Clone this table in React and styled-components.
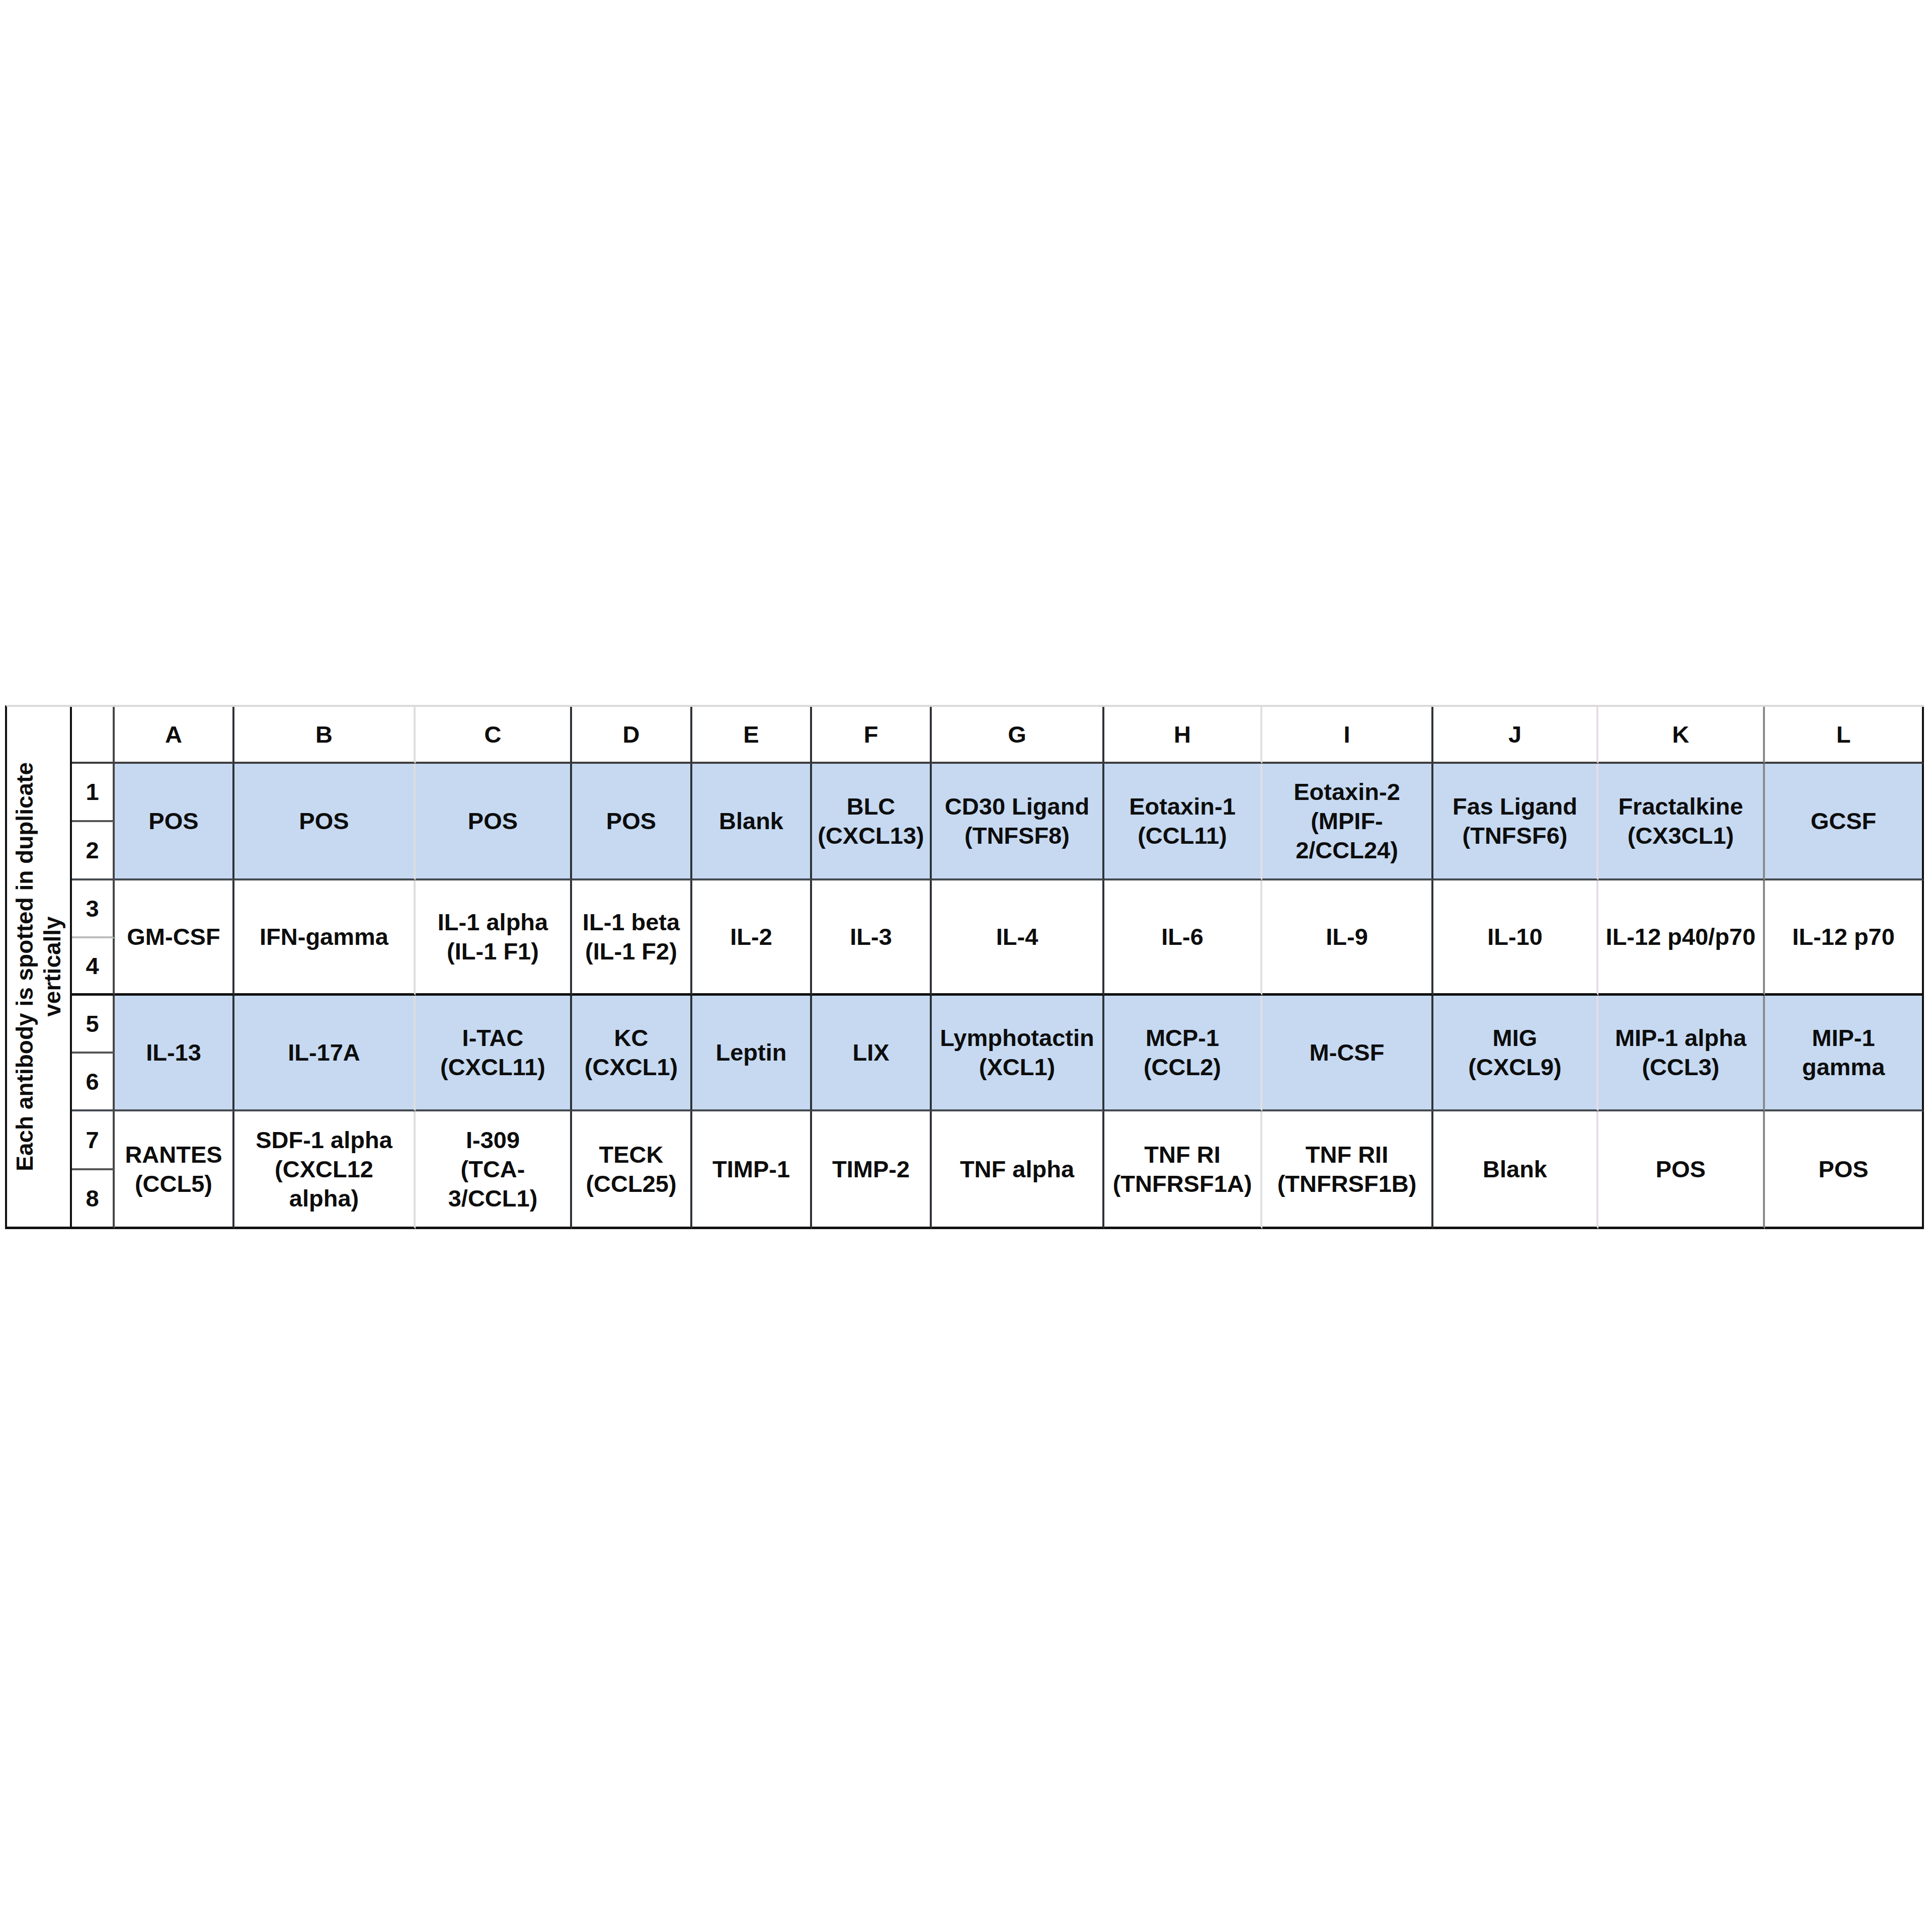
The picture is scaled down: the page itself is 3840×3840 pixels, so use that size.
import React from "react";
import styled, { createGlobalStyle } from "styled-components";

const Global = createGlobalStyle`
  html, body { margin: 0; padding: 0; background: #ffffff; }
  body { font-family: "Liberation Sans", Arial, sans-serif; }
`;

const Page = styled.div`
  width: 3840px;
  height: 3840px;
  box-sizing: border-box;
  padding: 1401px 0 0 10px;
  background: #ffffff;
`;

const COLS = [129, 85, 238, 360, 311, 239, 238, 238, 343, 314, 340, 328, 331, 316];
const ROWS = [113, 116, 116, 115, 114, 115, 115, 117, 117];

const Sheet = styled.div`
  display: grid;
  grid-template-columns: ${COLS.map((c) => c + "px").join(" ")};
  grid-template-rows: ${ROWS.map((r) => r + "px").join(" ")};
  border-top: 4px solid #dadada;
  border-left: 4px solid #111111;
  width: max-content;
  font-family: "Liberation Sans", Arial, sans-serif;
  font-weight: 700;
  font-size: 47px;
  line-height: 58px;
  color: #0d0d0d;
`;

const Cell = styled.div`
  grid-column: ${(p) => p.$col};
  grid-row: ${(p) => p.$row} / span ${(p) => p.$span || 1};
  box-sizing: border-box;
  display: flex;
  align-items: center;
  justify-content: center;
  text-align: center;
  white-space: nowrap;
  background: ${(p) => p.$fill || "#ffffff"};
  border-right: 4px solid ${(p) => p.$right || "#333333"};
  border-bottom: ${(p) => p.$bw || 4}px solid ${(p) => p.$bottom || "#3d3d3d"};
`;

const LabelCell = styled.div`
  grid-column: 1;
  grid-row: 1 / span 9;
  box-sizing: border-box;
  display: flex;
  align-items: center;
  justify-content: center;
  border-right: 4px solid #111111;
  border-bottom: 5px solid #111111;
  background: #ffffff;
`;

const LabelText = styled.span`
  writing-mode: vertical-rl;
  transform: rotate(180deg);
  text-align: center;
  font-size: 46px;
  line-height: 55px;
  white-space: nowrap;
`;

const Lines = styled.span`
  display: inline-block;
`;

const LETTERS = ["A", "B", "C", "D", "E", "F", "G", "H", "I", "J", "K", "L"];

const V_LINES = [
  "#2f3338", // A|B
  "#dedede", // B|C
  "#2f3338", // C|D
  "#2f3338", // D|E
  "#2f3338", // E|F
  "#2f3338", // F|G
  "#2f3338", // G|H
  "#e0e0e0", // H|I
  "#2f3338", // I|J
  "#e6dce6", // J|K
  "#8a8a8a", // K|L
  "#111111", // right edge
];

const BLUE = "#c6d9f1";

const GROUPS = [
  {
    fill: BLUE,
    bottom: "#454b52",
    bw: 4,
    items: [
      ["POS"],
      ["POS"],
      ["POS"],
      ["POS"],
      ["Blank"],
      ["BLC", "(CXCL13)"],
      ["CD30 Ligand", "(TNFSF8)"],
      ["Eotaxin-1", "(CCL11)"],
      ["Eotaxin-2", "(MPIF-", "2/CCL24)"],
      ["Fas Ligand", "(TNFSF6)"],
      ["Fractalkine", "(CX3CL1)"],
      ["GCSF"],
    ],
  },
  {
    fill: "#ffffff",
    bottom: "#111111",
    bw: 5,
    items: [
      ["GM-CSF"],
      ["IFN-gamma"],
      ["IL-1 alpha", "(IL-1 F1)"],
      ["IL-1 beta", "(IL-1 F2)"],
      ["IL-2"],
      ["IL-3"],
      ["IL-4"],
      ["IL-6"],
      ["IL-9"],
      ["IL-10"],
      ["IL-12 p40/p70"],
      ["IL-12 p70"],
    ],
  },
  {
    fill: BLUE,
    bottom: "#454b52",
    bw: 4,
    items: [
      ["IL-13"],
      ["IL-17A"],
      ["I-TAC", "(CXCL11)"],
      ["KC", "(CXCL1)"],
      ["Leptin"],
      ["LIX"],
      ["Lymphotactin", "(XCL1)"],
      ["MCP-1", "(CCL2)"],
      ["M-CSF"],
      ["MIG", "(CXCL9)"],
      ["MIP-1 alpha", "(CCL3)"],
      ["MIP-1", "gamma"],
    ],
  },
  {
    fill: "#ffffff",
    bottom: "#111111",
    bw: 5,
    items: [
      ["RANTES", "(CCL5)"],
      ["SDF-1 alpha", "(CXCL12", "alpha)"],
      ["I-309", "(TCA-", "3/CCL1)"],
      ["TECK", "(CCL25)"],
      ["TIMP-1"],
      ["TIMP-2"],
      ["TNF alpha"],
      ["TNF RI", "(TNFRSF1A)"],
      ["TNF RII", "(TNFRSF1B)"],
      ["Blank"],
      ["POS"],
      ["POS"],
    ],
  },
];

const SUB_LINES = ["#555555", "#bdbdbd", "#555555", "#555555"];

function Text({ lines }) {
  return (
    <Lines>
      {lines.map((l, i) => (
        <React.Fragment key={i}>
          {i > 0 && <br />}
          {l}
        </React.Fragment>
      ))}
    </Lines>
  );
}

export default function App() {
  return (
    <>
      <Global />
      <Page>
        <Sheet>
          <LabelCell>
            <LabelText>
              Each antibody is spotted in duplicate
              <br />
              vertically
            </LabelText>
          </LabelCell>

          <Cell $col={2} $row={1} $right="#454545" $bottom="#3d3d3d" />
          {LETTERS.map((l, i) => (
            <Cell key={l} $col={i + 3} $row={1} $right={V_LINES[i]} $bottom="#3d3d3d">
              {l}
            </Cell>
          ))}

          {GROUPS.map((g, gi) => {
            const top = 2 + gi * 2;
            return (
              <React.Fragment key={gi}>
                <Cell $col={2} $row={top} $right="#454545" $bottom={SUB_LINES[gi]}>
                  {gi * 2 + 1}
                </Cell>
                <Cell $col={2} $row={top + 1} $right="#454545" $bottom={g.bottom} $bw={g.bw}>
                  {gi * 2 + 2}
                </Cell>
                {g.items.map((lines, ci) => (
                  <Cell
                    key={ci}
                    $col={ci + 3}
                    $row={top}
                    $span={2}
                    $fill={g.fill}
                    $right={V_LINES[ci]}
                    $bottom={g.bottom}
                    $bw={g.bw}
                  >
                    <Text lines={lines} />
                  </Cell>
                ))}
              </React.Fragment>
            );
          })}
        </Sheet>
      </Page>
    </>
  );
}
